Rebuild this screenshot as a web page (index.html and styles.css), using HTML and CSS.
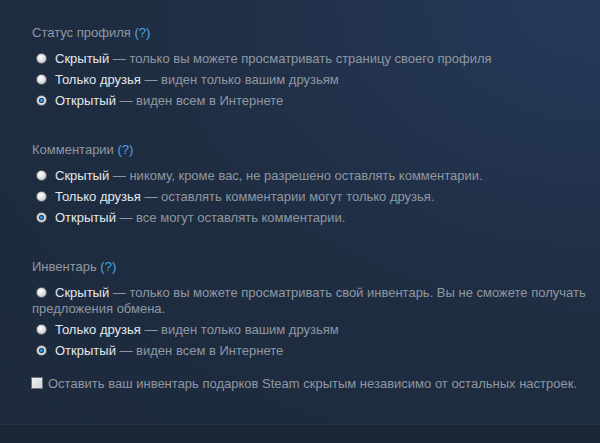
FILE: index.html
```html
<!DOCTYPE html>
<html lang="ru">
<head>
  <meta charset="UTF-8" />
  <title>Настройки приватности</title>
  <link rel="stylesheet" href="styles.css">
</head>
<body>
  <div class="panel">
    <div class="section">
      <div class="heading">Статус профиля <a class="help" href="#">(?)</a></div>
      <div class="option"><span class="radio"></span><span class="label">Скрытый</span> — только вы можете просматривать страницу своего профиля</div>
      <div class="option"><span class="radio"></span><span class="label">Только друзья</span> — виден только вашим друзьям</div>
      <div class="option"><span class="radio checked"></span><span class="label">Открытый</span> — виден всем в Интернете</div>
    </div>

    <div class="section">
      <div class="heading">Комментарии <a class="help" href="#">(?)</a></div>
      <div class="option"><span class="radio"></span><span class="label">Скрытый</span> — никому, кроме вас, не разрешено оставлять комментарии.</div>
      <div class="option"><span class="radio"></span><span class="label">Только друзья</span> — оставлять комментарии могут только друзья.</div>
      <div class="option"><span class="radio checked"></span><span class="label">Открытый</span> — все могут оставлять комментарии.</div>
    </div>

    <div class="section">
      <div class="heading">Инвентарь <a class="help" href="#">(?)</a></div>
      <div class="option"><span class="radio"></span><span class="label">Скрытый</span> — только вы можете просматривать свой инвентарь. Вы не сможете получать предложения обмена.</div>
      <div class="option"><span class="radio"></span><span class="label">Только друзья</span> — виден только вашим друзьям</div>
      <div class="option"><span class="radio checked"></span><span class="label">Открытый</span> — виден всем в Интернете</div>
      <div class="check-row"><span class="checkbox"></span>Оставить ваш инвентарь подарков Steam скрытым независимо от остальных настроек.</div>
    </div>
  </div>
</body>
</html>
```

FILE: styles.css
```css
* {margin: 0; padding: 0; box-sizing: border-box;}
body {
  background-color: #1b2637;
  font-family: "Liberation Sans", Arial, sans-serif;
  font-size: 13px;
  color: #8f98a0;
}
.panel {
  height: 425px;
  padding: 25px 8px 0 32px;
  background: radial-gradient(ellipse at 100% 0%, #26395a 0%, #1f2d42 55%, #1d2a3d 100%);
  border-bottom: 1px solid #243247;
}
.section {
  display: flex;
  flex-direction: column;
  gap: 5px;
  margin-bottom: 33px;
}
.heading {
  line-height: 16px;
  margin-bottom: 5px;
}
.help {
  color: #4ea4e0;
  text-decoration: none;
}
.option {
  line-height: 16px;
}
.label {
  color: #e4e8eb;
}
.radio {
  display: inline-block;
  width: 11px;
  height: 11px;
  margin: 0 8px 0 4px;
  vertical-align: -1px;
  border-radius: 50%;
  border: 1px solid #5c6570;
  background: radial-gradient(circle at 40% 35%, #ffffff 0%, #dcdcdc 55%, #a9a9a9 100%);
}
.radio.checked {
  background: radial-gradient(circle at 50% 50%, #45a8f0 0%, #1d6fc0 28%, #2a3a4c 36%, #e8e8e8 50%, #b5b5b5 100%);
}
.check-row {
  line-height: 16px;
  margin-top: 12px;
}
.checkbox {
  display: inline-block;
  width: 12px;
  height: 12px;
  margin: 0 5px 0 -1px;
  vertical-align: -1px;
  border: 1px solid #6b737c;
  background: linear-gradient(135deg, #f2f2f2, #d4d6da);
}
```
